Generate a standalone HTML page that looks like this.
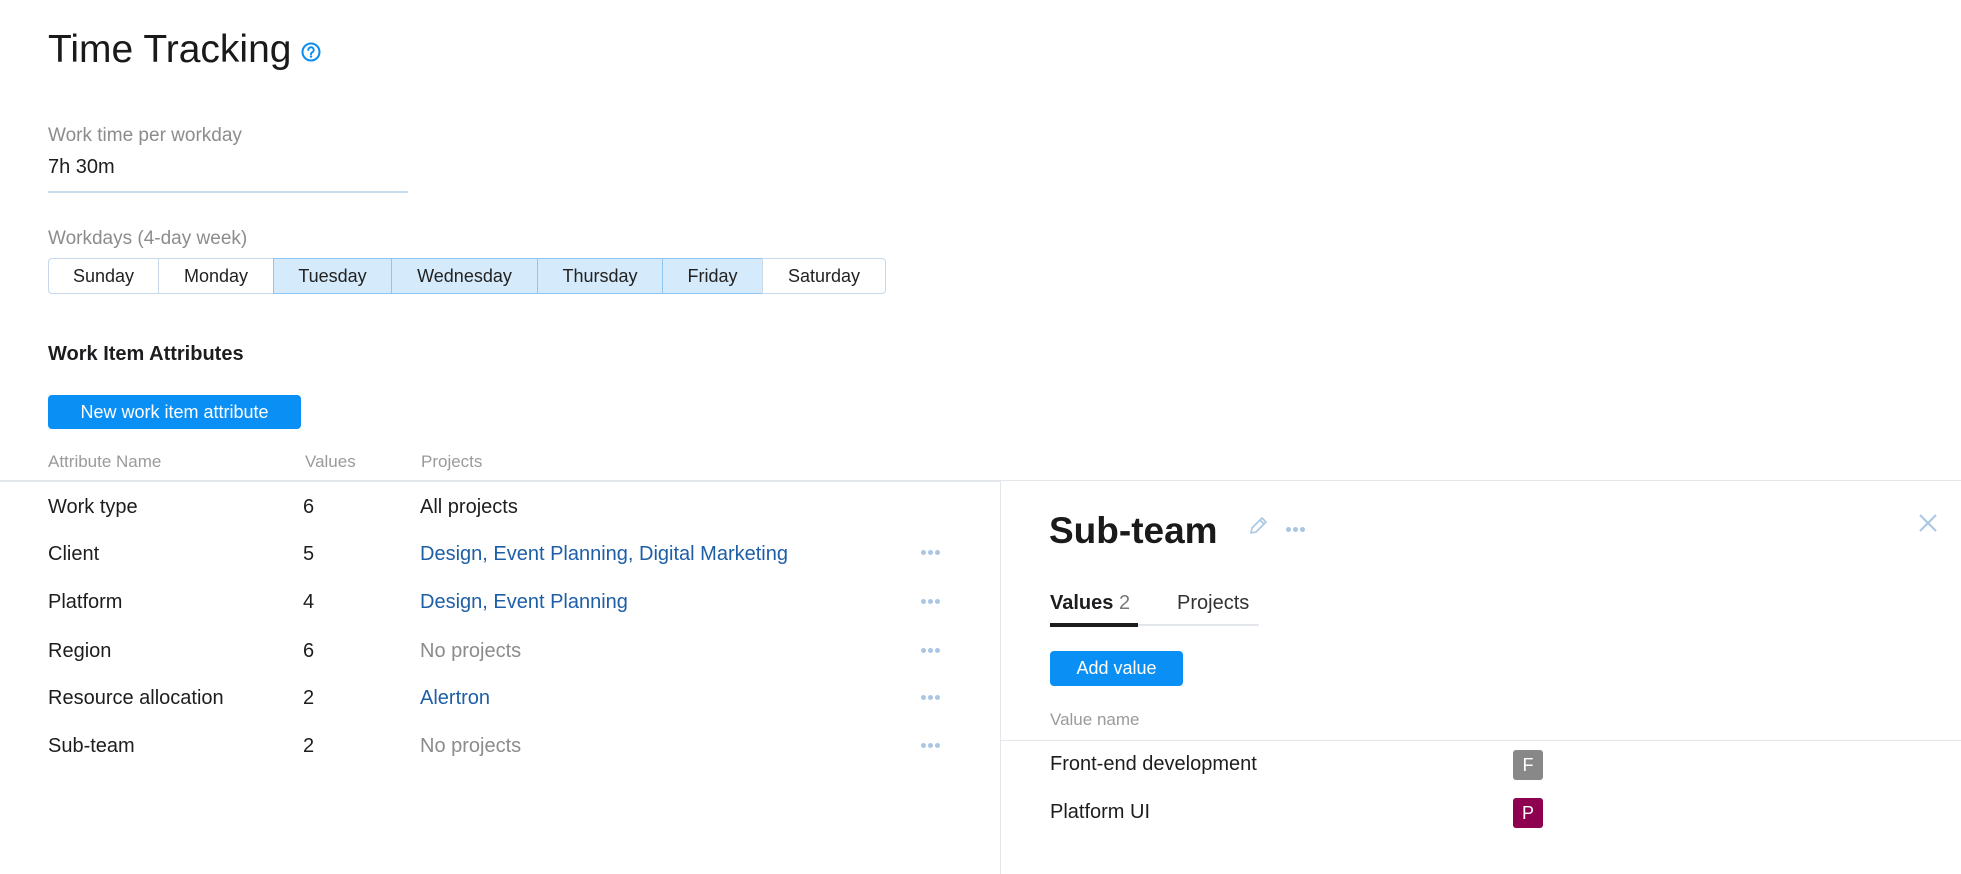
<!DOCTYPE html>
<html><head><meta charset="utf-8"><style>
*{margin:0;padding:0;box-sizing:border-box}
body{width:1961px;height:874px;background:#fff;font-family:"Liberation Sans",sans-serif;color:#1d1d1f;position:relative;overflow:hidden}
.a{position:absolute;white-space:nowrap}
.t{font-size:20px;line-height:24px}
.g{color:#8c8c8c}
.h{color:#9a9a9a;font-size:17px;line-height:20px}
.l{color:#1d5ea6}
.dots{position:absolute;width:22px;height:6px}
.dots i{position:absolute;top:0;width:5px;height:5px;border-radius:50%;background:#a9c6e3}
.day{position:absolute;top:258px;height:36px;line-height:34px;text-align:center;font-size:18px;border:1px solid #c8d8e8;background:#fff;color:#222}
.sel{background:#d5ebfc;border-color:#8dc5f3}
</style></head><body>
<div class="a" style="left:48px;top:28px;font-size:39px;line-height:44px;color:#1a1a1a">Time Tracking</div>
<svg class="a" style="left:300px;top:41px" width="22" height="22" viewBox="0 0 22 22"><circle cx="11" cy="11" r="8.5" fill="none" stroke="#0a8cf0" stroke-width="2"/><path d="M8.3 9a2.7 2.7 0 1 1 3.8 2.4c-.8.4-1.1.9-1.1 1.8" fill="none" stroke="#0a8cf0" stroke-width="1.9" stroke-linecap="round"/><circle cx="11" cy="15.6" r="1.2" fill="#0a8cf0"/></svg>

<div class="a g" style="left:48px;top:124px;font-size:19px;line-height:24px">Work time per workday</div>
<div class="a t" style="left:48px;top:155px">7h 30m</div>
<div class="a" style="left:48px;top:191px;width:360px;height:2px;background:#c9dcec"></div>

<div class="a g" style="left:48px;top:227px;font-size:19px;line-height:24px">Workdays (4-day week)</div>
<div class="day" style="left:48px;width:111px;border-radius:4px 0 0 4px">Sunday</div>
<div class="day" style="left:158px;width:116px">Monday</div>
<div class="day sel" style="left:273px;width:119px">Tuesday</div>
<div class="day sel" style="left:391px;width:147px">Wednesday</div>
<div class="day sel" style="left:537px;width:126px">Thursday</div>
<div class="day sel" style="left:662px;width:101px">Friday</div>
<div class="day" style="left:762px;width:124px;border-radius:0 4px 4px 0">Saturday</div>

<div class="a" style="left:48px;top:342px;font-size:20px;line-height:24px;font-weight:bold">Work Item Attributes</div>
<div class="a" style="left:48px;top:395px;width:253px;height:34px;background:#0a8ff5;border-radius:4px;color:#fff;font-size:18px;line-height:34px;text-align:center">New work item attribute</div>

<div class="a h" style="left:48px;top:452px">Attribute Name</div>
<div class="a h" style="left:305px;top:452px">Values</div>
<div class="a h" style="left:421px;top:452px">Projects</div>
<div class="a" style="left:0;top:480px;width:1001px;height:2px;background:#e3e7ec"></div>
<div class="a" style="left:1001px;top:480px;width:960px;height:1px;background:#e3e7ec"></div>
<div class="a" style="left:1000px;top:481px;width:1px;height:393px;background:#e3e7ec"></div>

<div class="a t" style="left:48px;top:495px">Work type</div><div class="a t" style="left:303px;top:495px">6</div><div class="a t" style="left:420px;top:495px">All projects</div>
<div class="a t" style="left:48px;top:542px">Client</div><div class="a t" style="left:303px;top:542px">5</div><div class="a t l" style="left:420px;top:542px">Design, Event Planning, Digital Marketing</div>
<div class="a t" style="left:48px;top:590px">Platform</div><div class="a t" style="left:303px;top:590px">4</div><div class="a t l" style="left:420px;top:590px">Design, Event Planning</div>
<div class="a t" style="left:48px;top:639px">Region</div><div class="a t" style="left:303px;top:639px">6</div><div class="a t g" style="left:420px;top:639px">No projects</div>
<div class="a t" style="left:48px;top:686px">Resource allocation</div><div class="a t" style="left:303px;top:686px">2</div><div class="a t l" style="left:420px;top:686px">Alertron</div>
<div class="a t" style="left:48px;top:734px">Sub-team</div><div class="a t" style="left:303px;top:734px">2</div><div class="a t g" style="left:420px;top:734px">No projects</div>
<div class="dots" style="left:921px;top:550px"><i style="left:0"></i><i style="left:7px"></i><i style="left:14px"></i></div>
<div class="dots" style="left:921px;top:599px"><i style="left:0"></i><i style="left:7px"></i><i style="left:14px"></i></div>
<div class="dots" style="left:921px;top:648px"><i style="left:0"></i><i style="left:7px"></i><i style="left:14px"></i></div>
<div class="dots" style="left:921px;top:695px"><i style="left:0"></i><i style="left:7px"></i><i style="left:14px"></i></div>
<div class="dots" style="left:921px;top:743px"><i style="left:0"></i><i style="left:7px"></i><i style="left:14px"></i></div>

<div class="a" style="left:1049px;top:510px;font-size:37px;line-height:42px;font-weight:bold;color:#1a1a1a">Sub-team</div>
<svg class="a" style="left:1248px;top:514px" width="22" height="22" viewBox="0 0 22 22"><path d="M3 19l1-5L14 4l4 4L8 18z M12 6l4 4" fill="none" stroke="#a9c6e3" stroke-width="1.6" stroke-linejoin="round"/></svg>
<div class="dots" style="left:1286px;top:527px"><i style="left:0"></i><i style="left:7px"></i><i style="left:14px"></i></div>
<svg class="a" style="left:1918px;top:513px" width="20" height="20" viewBox="0 0 20 20"><path d="M2 2L18 18M18 2L2 18" stroke="#a9c6e3" stroke-width="2"/></svg>

<div class="a" style="left:1050px;top:591px;font-size:20px;line-height:24px"><b>Values</b> <span style="color:#777">2</span></div>
<div class="a t" style="left:1177px;top:591px;color:#333">Projects</div>
<div class="a" style="left:1050px;top:624px;width:209px;height:2px;background:#e3e7ec"></div>
<div class="a" style="left:1050px;top:623px;width:88px;height:4px;background:#1d1d1f"></div>

<div class="a" style="left:1050px;top:651px;width:133px;height:35px;background:#0a8ff5;border-radius:4px;color:#fff;font-size:18px;line-height:35px;text-align:center">Add value</div>
<div class="a h" style="left:1050px;top:710px">Value name</div>
<div class="a" style="left:1001px;top:740px;width:960px;height:1px;background:#e3e7ec"></div>
<div class="a t" style="left:1050px;top:752px">Front-end development</div>
<div class="a t" style="left:1050px;top:800px">Platform UI</div>
<div class="a" style="left:1513px;top:750px;width:30px;height:30px;background:#888;border-radius:3px;color:#fff;font-size:18px;line-height:30px;text-align:center">F</div>
<div class="a" style="left:1513px;top:798px;width:30px;height:30px;background:#8e0050;border-radius:3px;color:#fff;font-size:18px;line-height:30px;text-align:center">P</div>
</body></html>
